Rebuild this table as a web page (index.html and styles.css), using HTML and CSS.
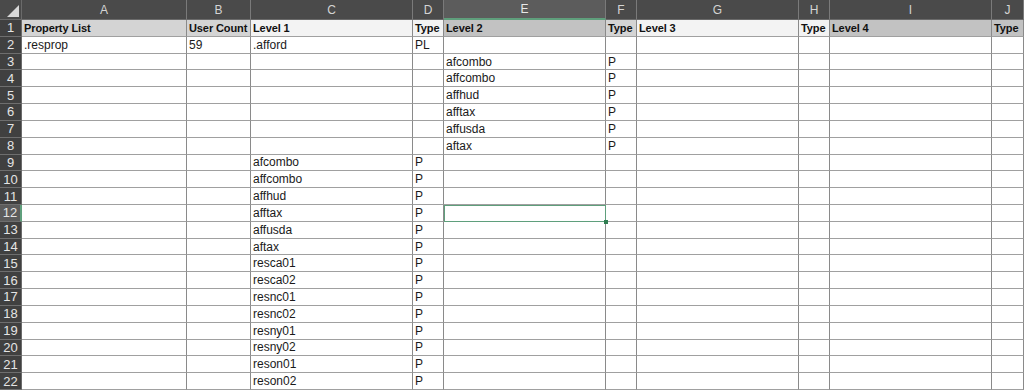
FILE: index.html
```html
<!DOCTYPE html>
<html>
<head>
<meta charset="utf-8">
<link rel="stylesheet" href="styles.css">
</head>
<body>
<div class="sheet">
  <div class="corner"><svg width="14" height="14" viewBox="0 0 14 14"><polygon points="13,1 13,13 1,13" fill="#d8d8d8"/></svg></div>
  <div class="ch">A</div><div class="ch">B</div><div class="ch">C</div><div class="ch">D</div><div class="ch sel">E</div><div class="ch">F</div><div class="ch">G</div><div class="ch">H</div><div class="ch">I</div><div class="ch">J</div>

  <div class="rh">1</div>
  <div class="c b g1">Property List</div><div class="c b g1">User Count</div><div class="c b g0">Level 1</div><div class="c b g0">Type</div><div class="c b g2">Level 2</div><div class="c b g1">Type</div><div class="c b g0">Level 3</div><div class="c b g0">Type</div><div class="c b g2">Level 4</div><div class="c b g2">Type</div>

  <div class="rh">2</div>
  <div class="c">.resprop</div><div class="c">59</div><div class="c">.afford</div><div class="c">PL</div><div class="c"></div><div class="c"></div><div class="c"></div><div class="c"></div><div class="c"></div><div class="c"></div>

  <div class="rh">3</div>
  <div class="c"></div><div class="c"></div><div class="c"></div><div class="c"></div><div class="c">afcombo</div><div class="c">P</div><div class="c"></div><div class="c"></div><div class="c"></div><div class="c"></div>
  <div class="rh">4</div>
  <div class="c"></div><div class="c"></div><div class="c"></div><div class="c"></div><div class="c">affcombo</div><div class="c">P</div><div class="c"></div><div class="c"></div><div class="c"></div><div class="c"></div>
  <div class="rh">5</div>
  <div class="c"></div><div class="c"></div><div class="c"></div><div class="c"></div><div class="c">affhud</div><div class="c">P</div><div class="c"></div><div class="c"></div><div class="c"></div><div class="c"></div>
  <div class="rh">6</div>
  <div class="c"></div><div class="c"></div><div class="c"></div><div class="c"></div><div class="c">afftax</div><div class="c">P</div><div class="c"></div><div class="c"></div><div class="c"></div><div class="c"></div>
  <div class="rh">7</div>
  <div class="c"></div><div class="c"></div><div class="c"></div><div class="c"></div><div class="c">affusda</div><div class="c">P</div><div class="c"></div><div class="c"></div><div class="c"></div><div class="c"></div>
  <div class="rh">8</div>
  <div class="c"></div><div class="c"></div><div class="c"></div><div class="c"></div><div class="c">aftax</div><div class="c">P</div><div class="c"></div><div class="c"></div><div class="c"></div><div class="c"></div>

  <div class="rh">9</div>
  <div class="c"></div><div class="c"></div><div class="c">afcombo</div><div class="c">P</div><div class="c"></div><div class="c"></div><div class="c"></div><div class="c"></div><div class="c"></div><div class="c"></div>
  <div class="rh">10</div>
  <div class="c"></div><div class="c"></div><div class="c">affcombo</div><div class="c">P</div><div class="c"></div><div class="c"></div><div class="c"></div><div class="c"></div><div class="c"></div><div class="c"></div>
  <div class="rh">11</div>
  <div class="c"></div><div class="c"></div><div class="c">affhud</div><div class="c">P</div><div class="c"></div><div class="c"></div><div class="c"></div><div class="c"></div><div class="c"></div><div class="c"></div>
  <div class="rh sel">12</div>
  <div class="c"></div><div class="c"></div><div class="c">afftax</div><div class="c">P</div><div class="c active"><span class="handle"></span></div><div class="c"></div><div class="c"></div><div class="c"></div><div class="c"></div><div class="c"></div>
  <div class="rh">13</div>
  <div class="c"></div><div class="c"></div><div class="c">affusda</div><div class="c">P</div><div class="c"></div><div class="c"></div><div class="c"></div><div class="c"></div><div class="c"></div><div class="c"></div>
  <div class="rh">14</div>
  <div class="c"></div><div class="c"></div><div class="c">aftax</div><div class="c">P</div><div class="c"></div><div class="c"></div><div class="c"></div><div class="c"></div><div class="c"></div><div class="c"></div>
  <div class="rh">15</div>
  <div class="c"></div><div class="c"></div><div class="c">resca01</div><div class="c">P</div><div class="c"></div><div class="c"></div><div class="c"></div><div class="c"></div><div class="c"></div><div class="c"></div>
  <div class="rh">16</div>
  <div class="c"></div><div class="c"></div><div class="c">resca02</div><div class="c">P</div><div class="c"></div><div class="c"></div><div class="c"></div><div class="c"></div><div class="c"></div><div class="c"></div>
  <div class="rh">17</div>
  <div class="c"></div><div class="c"></div><div class="c">resnc01</div><div class="c">P</div><div class="c"></div><div class="c"></div><div class="c"></div><div class="c"></div><div class="c"></div><div class="c"></div>
  <div class="rh">18</div>
  <div class="c"></div><div class="c"></div><div class="c">resnc02</div><div class="c">P</div><div class="c"></div><div class="c"></div><div class="c"></div><div class="c"></div><div class="c"></div><div class="c"></div>
  <div class="rh">19</div>
  <div class="c"></div><div class="c"></div><div class="c">resny01</div><div class="c">P</div><div class="c"></div><div class="c"></div><div class="c"></div><div class="c"></div><div class="c"></div><div class="c"></div>
  <div class="rh">20</div>
  <div class="c"></div><div class="c"></div><div class="c">resny02</div><div class="c">P</div><div class="c"></div><div class="c"></div><div class="c"></div><div class="c"></div><div class="c"></div><div class="c"></div>
  <div class="rh">21</div>
  <div class="c"></div><div class="c"></div><div class="c">reson01</div><div class="c">P</div><div class="c"></div><div class="c"></div><div class="c"></div><div class="c"></div><div class="c"></div><div class="c"></div>
  <div class="rh">22</div>
  <div class="c"></div><div class="c"></div><div class="c">reson02</div><div class="c">P</div><div class="c"></div><div class="c"></div><div class="c"></div><div class="c"></div><div class="c"></div><div class="c"></div>
</div>
</body>
</html>
```
FILE: styles.css
```css
html, body {
  margin: 0;
  padding: 0;
  background: #ffffff;
  overflow: hidden;
}
.sheet {
  display: grid;
  grid-template-columns: 22px 165px 64px 162px 31px 162px 31px 162px 31px 162px 32px;
  grid-template-rows: 20px repeat(22, 1fr);
  width: 1024px;
  height: 390px;
  font-family: "Liberation Sans", Arial, sans-serif;
  font-size: 12px;
  color: #1a1a1a;
}
.corner {
  background: #4a4a4a;
  border-right: 1px solid #6a6a6a;
  border-bottom: 1px solid #6a6a6a;
  display: flex;
  align-items: flex-end;
  justify-content: flex-end;
  padding: 0 1px 1px 0;
}
.corner svg { display: block; }
.ch {
  background: #4a4a4a;
  color: #d4d4d4;
  display: flex;
  align-items: center;
  justify-content: center;
  border-right: 1px solid #7a7a7a;
  border-bottom: 1px solid #6a6a6a;
  font-size: 12px;
}
.ch.sel {
  background: #5c5c5c;
  color: #e8e8e8;
  border-bottom: 2px solid #5f9f7c;
}
.rh {
  background: #404040;
  color: #e4e4e4;
  display: flex;
  align-items: center;
  justify-content: center;
  border-bottom: 1px solid #6e6e6e;
  border-right: 1px solid #6a6a6a;
  font-size: 13px;
}
.rh.sel {
  background: #5c5c5c;
  border-right: 2px solid #5f9f7c;
}
.c {
  border-right: 1px solid #8a8a8a;
  border-bottom: 1px solid #a0a0a0;
  padding-left: 2px;
  display: flex;
  align-items: center;
  white-space: nowrap;
  overflow: hidden;
  min-width: 0;
}
.b {
  font-weight: bold;
  font-size: 11px;
  letter-spacing: -0.1px;
  color: #111;
}
.g0 { background: #f3f3f3; }
.g1 { background: #d4d4d4; }
.g2 { background: #c2c2c2; }
.active {
  position: relative;
  overflow: visible;
  outline: 1px solid #5f9f7c;
  outline-offset: -1px;
}
.handle {
  position: absolute;
  right: -3px;
  bottom: -3px;
  width: 4px;
  height: 4px;
  background: #2e7d50;
}
```
